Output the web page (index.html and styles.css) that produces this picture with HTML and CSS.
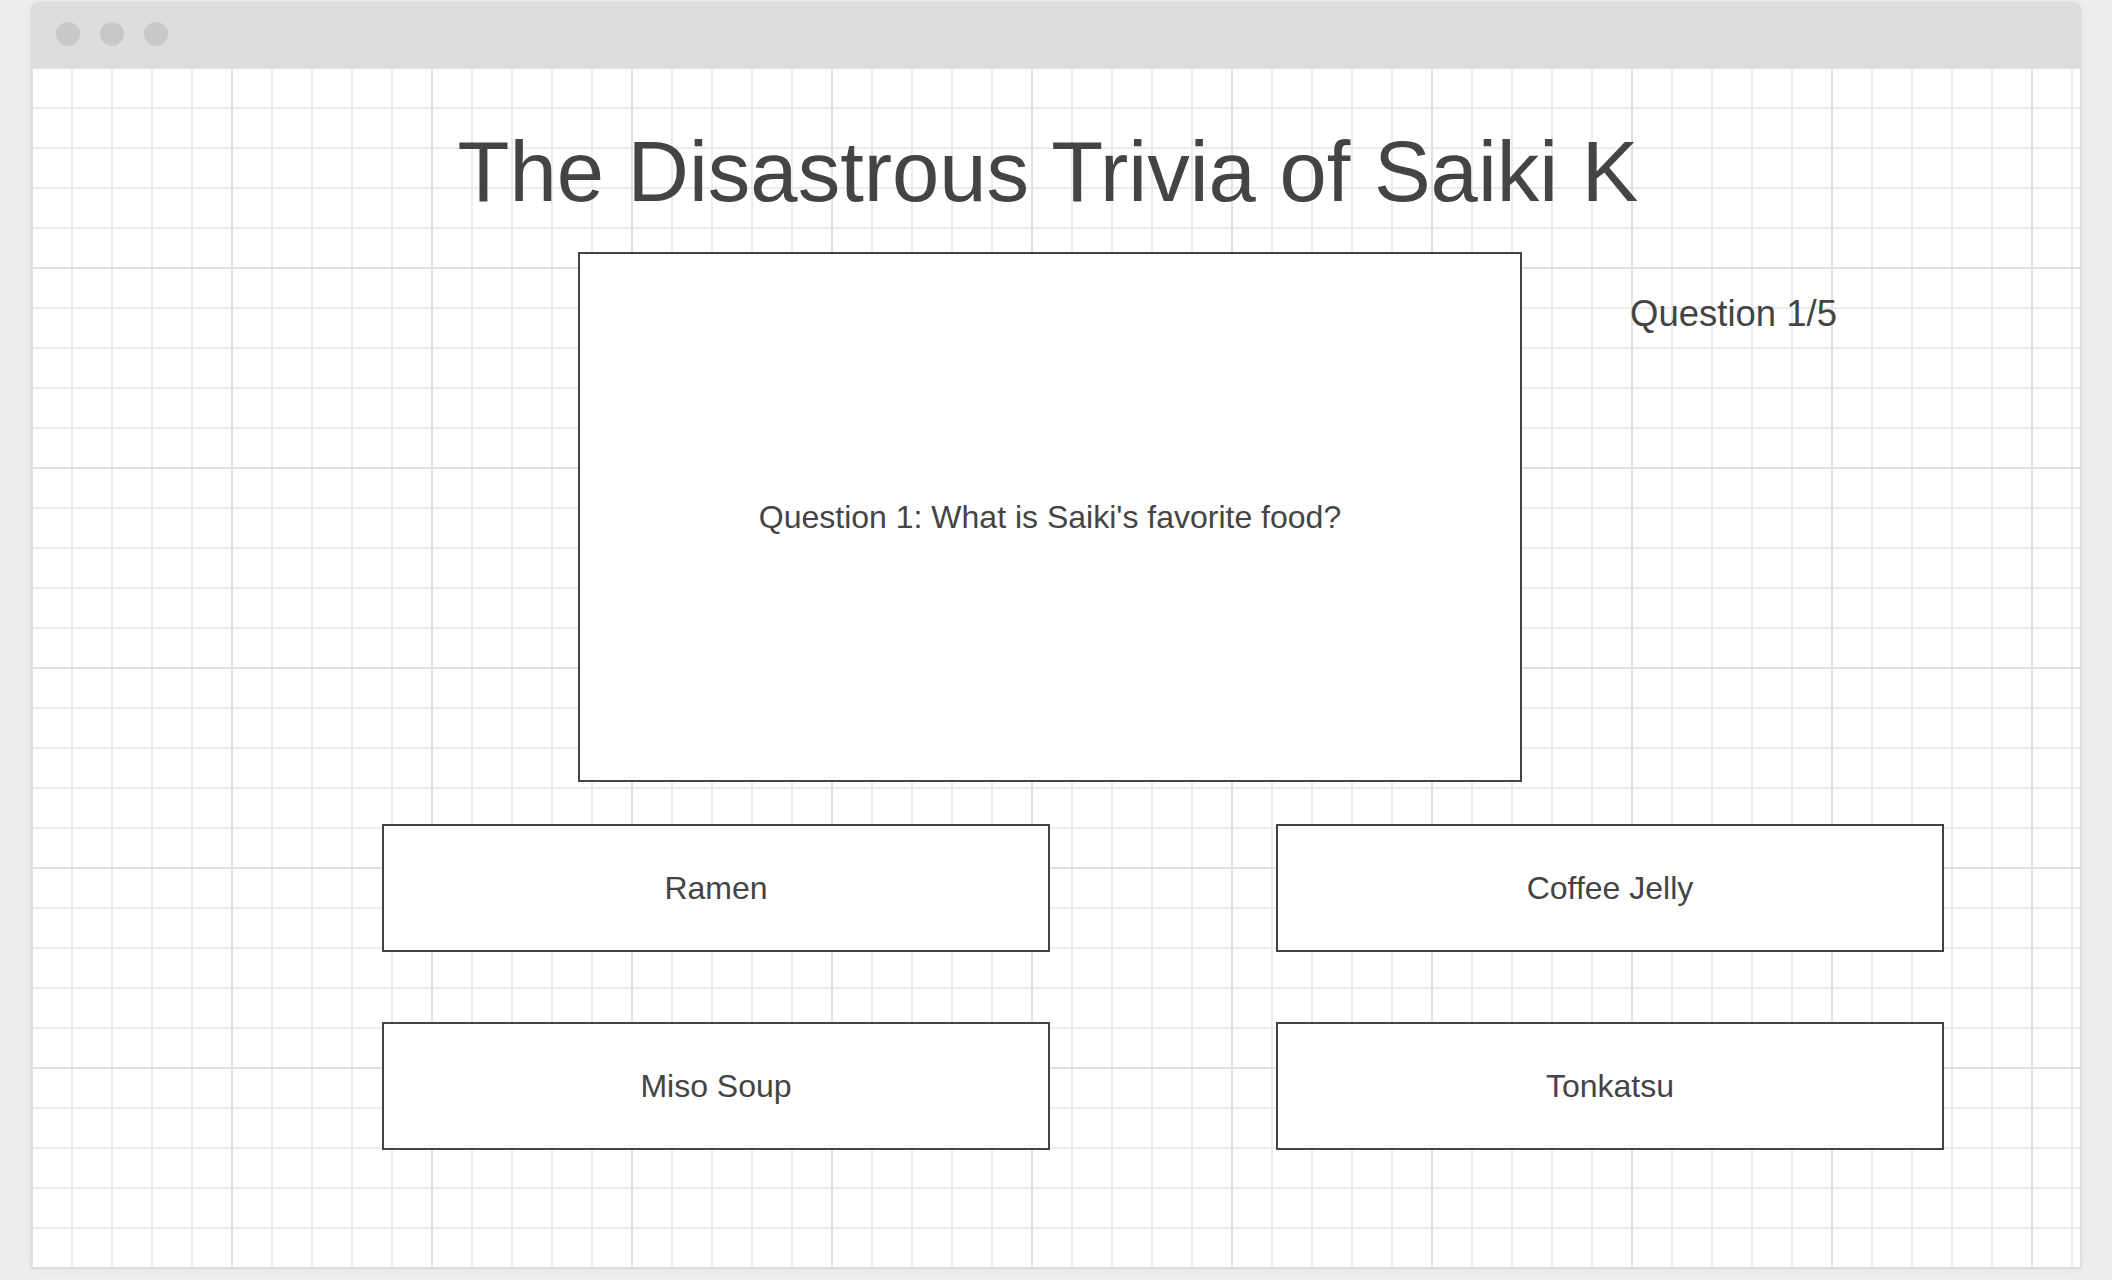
FILE: index.html
```html
<!DOCTYPE html>
<html lang="en">
<head>
<meta charset="utf-8">
<title>The Disastrous Trivia of Saiki K</title>
<link rel="stylesheet" href="styles.css">
</head>
<body>
<div class="window">
  <div class="titlebar">
    <span class="dot"></span>
    <span class="dot"></span>
    <span class="dot"></span>
  </div>
  <main class="canvas">
    <h1 class="title">The Disastrous Trivia of Saiki K</h1>
    <section class="question-row">
      <div class="question-box">Question 1: What is Saiki's favorite food?</div>
      <div class="counter">Question 1/5</div>
    </section>
    <section class="answers">
      <button class="answer">Ramen</button>
      <button class="answer">Coffee Jelly</button>
      <button class="answer">Miso Soup</button>
      <button class="answer">Tonkatsu</button>
    </section>
  </main>
</div>
</body>
</html>
```
FILE: styles.css
```css
* { box-sizing: border-box; }

html, body {
  margin: 0;
  padding: 0;
  background: #eeeeee;
  font-family: "Liberation Sans", Arial, sans-serif;
  color: #444444;
}

body {
  padding: 2px 30px 0 30px;
  width: 2112px;
  height: 1280px;
  overflow: hidden;
}

.window {
  width: 2052px;
  height: 1267px;
  display: flex;
  flex-direction: column;
  border-radius: 10px 10px 0 0;
  box-shadow: 0 0 8px rgba(0, 0, 0, 0.06);
  background: #dddddd;
}

.titlebar {
  height: 66px;
  flex: none;
  display: flex;
  gap: 20px;
  padding: 20px 0 0 26px;
  background: #dddddd;
  border-radius: 10px 10px 0 0;
}

.dot {
  width: 24px;
  height: 24px;
  border-radius: 50%;
  background: #c8c8c8;
}

.canvas {
  flex: 1;
  margin: 0 2px 2px 2px;
  background-color: #ffffff;
  background-image:
    linear-gradient(to right, #e1e1e1 2px, transparent 2px),
    linear-gradient(to bottom, #e1e1e1 2px, transparent 2px),
    linear-gradient(to right, #ececec 2px, transparent 2px),
    linear-gradient(to bottom, #ececec 2px, transparent 2px);
  background-size: 200px 200px, 200px 200px, 40px 40px, 40px 40px;
  background-position: -1px -1px, -1px -1px, -1px -1px, -1px -1px;
  display: flex;
  flex-direction: column;
}

.title {
  margin: 0;
  padding: 62px 16px 0 0;
  font-size: 85px;
  line-height: 84px;
  font-weight: normal;
  text-align: center;
  color: #444444;
}

.question-row {
  display: flex;
  align-items: flex-start;
  margin: 38px 0 0 546px;
}

.question-box {
  width: 944px;
  height: 530px;
  border: 2px solid #444444;
  background: #ffffff;
  display: flex;
  align-items: center;
  justify-content: center;
  font-size: 32px;
  color: #444444;
}

.counter {
  margin: 44px 0 0 108px;
  font-size: 36.5px;
  line-height: 36px;
  color: #444444;
}

.answers {
  display: grid;
  grid-template-columns: 668px 668px;
  grid-auto-rows: 128px;
  column-gap: 226px;
  row-gap: 70px;
  margin: 42px 0 0 350px;
}

.answer {
  margin: 0;
  padding: 0;
  border: 2px solid #444444;
  background: #ffffff;
  font-family: "Liberation Sans", Arial, sans-serif;
  font-size: 32px;
  color: #444444;
  display: flex;
  align-items: center;
  justify-content: center;
}
```
